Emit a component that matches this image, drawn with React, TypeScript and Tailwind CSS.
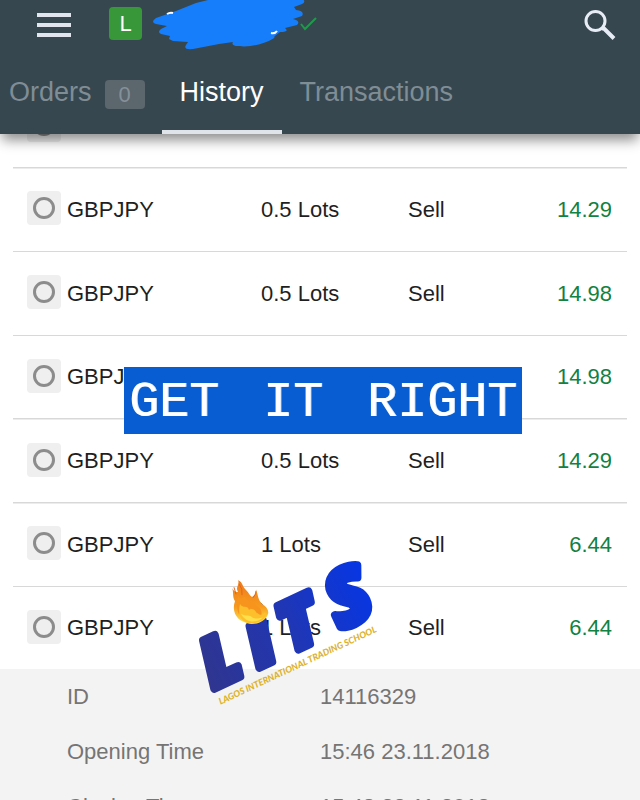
import { useState } from 'react'

type Trade = {
  id: number
  symbol: string
  lots: string
  side: 'Buy' | 'Sell'
  profit: string
}

const trades: Trade[] = [
  { id: 1, symbol: 'GBPJPY', lots: '0.5', side: 'Sell', profit: '14.29' },
  { id: 2, symbol: 'GBPJPY', lots: '0.5', side: 'Sell', profit: '14.29' },
  { id: 3, symbol: 'GBPJPY', lots: '0.5', side: 'Sell', profit: '14.98' },
  { id: 4, symbol: 'GBPJPY', lots: '0.5', side: 'Sell', profit: '14.98' },
  { id: 5, symbol: 'GBPJPY', lots: '0.5', side: 'Sell', profit: '14.29' },
  { id: 6, symbol: 'GBPJPY', lots: '1', side: 'Sell', profit: '6.44' },
  { id: 7, symbol: 'GBPJPY', lots: '1', side: 'Sell', profit: '6.44' },
]

const details = [
  { label: 'ID', value: '14116329' },
  { label: 'Opening Time', value: '15:46 23.11.2018' },
  { label: 'Closing Time', value: '15:48 23.11.2018' },
]

const tabs = [
  { key: 'orders', label: 'Orders', count: 0 },
  { key: 'history', label: 'History' },
  { key: 'transactions', label: 'Transactions' },
]

function Scribble() {
  return (
    <svg viewBox="0 0 170 52" className="h-[52px] w-[170px]" aria-hidden="true">
      <path
        d="M60 0L151 0Q154 3 150 5L142 8L144 11Q153 12 150 17L141 20Q149 22 145 26L133 29Q138 33 128 33L119 40Q101 48 84 47Q79 46 81 43L67 45L41 50Q31 51 34 46L36 43L21 42L17 40L18 37L9 35Q5 33 9 30L15 27L4 25Q-2 23 4 19L24 12L44 4Z"
        fill="#167efb"
      />
      <path
        d="M84 45l8 1q18-1 29-8"
        stroke="#167efb"
        strokeWidth="3"
        fill="none"
        strokeLinecap="round"
      />
      <path d="M15 15q3-2 6-1M119 34q4 1 6-2" stroke="#fff" strokeWidth="2" fill="none" />
      <path d="M149 25l4 5 11-11" stroke="#1f9a4b" strokeWidth="2" fill="none" />
    </svg>
  )
}

function Header({ tab, onTab }: { tab: string; onTab: (key: string) => void }) {
  return (
    <header className="relative z-10 bg-[#37474f] shadow-[0_8px_12px_-2px_rgba(0,0,0,0.45)]">
      <div className="flex h-[50px] items-center pr-6 pl-[37px]">
        <button type="button" aria-label="Menu" className="flex w-[34px] flex-col gap-[6px]">
          <span className="h-1 w-full bg-[#e1e5ee]" />
          <span className="h-1 w-full bg-[#e1e5ee]" />
          <span className="h-1 w-full bg-[#e1e5ee]" />
        </button>
        <span className="mb-[3px] ml-[38px] flex size-[33px] items-center justify-center rounded bg-[#389738] text-[22px] text-white">
          L
        </span>
        <div className="ml-[10px] flex-1">
          <Scribble />
        </div>
        <button type="button" aria-label="Search">
          <svg viewBox="0 0 32 32" className="size-8" fill="none" stroke="#e8ecf5">
            <circle cx="11.500" cy="12" r="9.500" strokeWidth="3" />
            <path d="M18 19.500L20 19.500L30 29.500" strokeWidth="4" />
          </svg>
        </button>
      </div>

      <nav className="flex h-[84px] text-[27px]">
        {tabs.map(t => (
          <button
            key={t.key}
            type="button"
            onClick={() => onTab(t.key)}
            className={`flex items-center gap-[13px] border-y-4 border-t-transparent px-[18px] first:pr-[17px] first:pl-[9px] ${
              t.key === tab ? 'border-b-[#dfe3ea] text-white' : 'border-b-transparent text-[#7f8d95]'
            }`}
          >
            {t.label}
            {t.count !== undefined && (
              <span className="mt-1 flex h-[29px] w-10 items-center justify-center rounded bg-[#5c666d] text-[22px] text-[#84919a]">
                {t.count}
              </span>
            )}
          </button>
        ))}
      </nav>
    </header>
  )
}

function TradeRow({ trade }: { trade: Trade }) {
  return (
    <tr className="border-b border-[#d8d8d8] shadow-[0_1px_0_#ececec] last:border-0 last:shadow-none">
      <td className="pl-[14px]">
        <div className="flex items-center gap-[6px]">
          <span className="mb-[2px] flex size-[34px] items-center justify-center rounded bg-[#efefef]">
            <span className="size-[22px] rounded-full border-3 border-[#8c8c8c]" />
          </span>
          {trade.symbol}
        </div>
      </td>
      <td>{trade.lots} Lots</td>
      <td>{trade.side}</td>
      <td className="pr-[15px] text-right text-[#118242]">{trade.profit}</td>
    </tr>
  )
}

function Flame() {
  return (
    <g transform="translate(4 17) scale(1 0.88)">
      <path
        d="M44 62C36 58 33 48 36 39C33 34 35 28 33 24C35 28 37 29 39 28C36 23 41 20 39 15C44 17 43 22 47 26C50 29 50 32 53 34C56 32 58 29 57 25C59 32 59 37 63 42C69 46 72 52 66 59C59 66 50 66 44 62Z"
        fill="url(#flame)"
      />
      <path
        d="M39 33C43 40 45 30 47 36C50 42 56 38 57 44C61 45 64 50 62 56C58 50 54 52 52 47C48 52 44 48 40 54C37 46 38 40 39 33Z"
        fill="#f7941d"
      />
      <path
        d="M41 42C44 48 48 42 50 49C53 46 57 49 58 54C61 55 65 54 66 51C69 58 60 65 52 64C43 64 38 56 41 42Z"
        fill="#fdc02c"
      />
      <path d="M42 53C47 57 50 53 54 58C58 59 62 58 64 57C58 64 47 64 42 53Z" fill="#fee04a" />
      <path d="M35 23l2 8M40 19q4 6 3 13M54 35q3-4 3-8" stroke="#e4601c" strokeWidth="1" fill="none" />
    </g>
  )
}

function Logo() {
  return (
    <svg viewBox="0 0 200 160" className="h-40 w-[200px]">
      <defs>
        <linearGradient id="ink" x1="0" x2="190" y1="0" y2="0" gradientUnits="userSpaceOnUse">
          <stop offset="0" stopColor="#2f3590" />
          <stop offset="0.5" stopColor="#2036b4" />
          <stop offset="1" stopColor="#0636e6" />
        </linearGradient>
        <linearGradient id="flame" x1="0" x2="0" y1="0" y2="1">
          <stop offset="0" stopColor="#ee7a1c" />
          <stop offset="0.6" stopColor="#f79a1e" />
          <stop offset="1" stopColor="#fde64c" />
        </linearGradient>
      </defs>
      <g transform="translate(20 143) rotate(-25)">
        <text
          y="-4"
          className="font-['Open_Sans',sans-serif] text-[68px] font-extrabold italic"
          fill="url(#ink)"
          stroke="url(#ink)"
          strokeWidth="8"
          strokeLinejoin="round"
        >
          <tspan x="0">L</tspan>
          <tspan x="50" className="text-[76px]">i</tspan>
          <tspan x="86">T</tspan>
          <tspan x="140" className="text-[77px]">S</tspan>
        </text>
        <text y="13" className="font-[Lato,sans-serif] text-[9px] font-black italic" fill="#dcb22c">
          LAGOS INTERNATIONAL TRADING SCHOOL
        </text>
      </g>
      <Flame />
    </svg>
  )
}

export default function App() {
  const [tab, setTab] = useState('history')

  return (
    <div className="relative h-screen overflow-hidden bg-white font-['Liberation_Sans',Arial,sans-serif] text-[22px] text-[#1f1f1f]">
      <Header tab={tab} onTab={setTab} />

      {/* the list is scrolled, its first row sits under the header */}
      <main className="-mt-[49px]">
        <div className="px-[13px]">
          <table className="h-[584px] w-full table-fixed border-collapse">
            <colgroup>
              <col className="w-[248px]" />
              <col className="w-[147px]" />
              <col />
              <col />
            </colgroup>
            <tbody>
              {trades.map(t => (
                <TradeRow key={t.id} trade={t} />
              ))}
            </tbody>
          </table>
        </div>

        <dl className="bg-[#f3f3f3] text-[#757575]">
          {details.map(d => (
            <div key={d.label} className="grid h-[55px] grid-cols-2 items-center">
              <dt className="pl-[67px]">{d.label}</dt>
              <dd>{d.value}</dd>
            </div>
          ))}
        </dl>
      </main>

      {/* stickers over the list */}
      <div className="absolute top-[367px] left-[124px] flex h-[67px] w-[398px] items-center justify-between bg-[#075dd1] px-[5px] pt-1 font-['Liberation_Mono',monospace] text-[50px] text-white [text-shadow:1px_0_0_#d6e6fb]">
        <span>GET</span>
        <span>IT</span>
        <span>RIGHT</span>
      </div>
      <div className="absolute top-[550px] left-[195px]">
        <Logo />
      </div>
    </div>
  )
}
